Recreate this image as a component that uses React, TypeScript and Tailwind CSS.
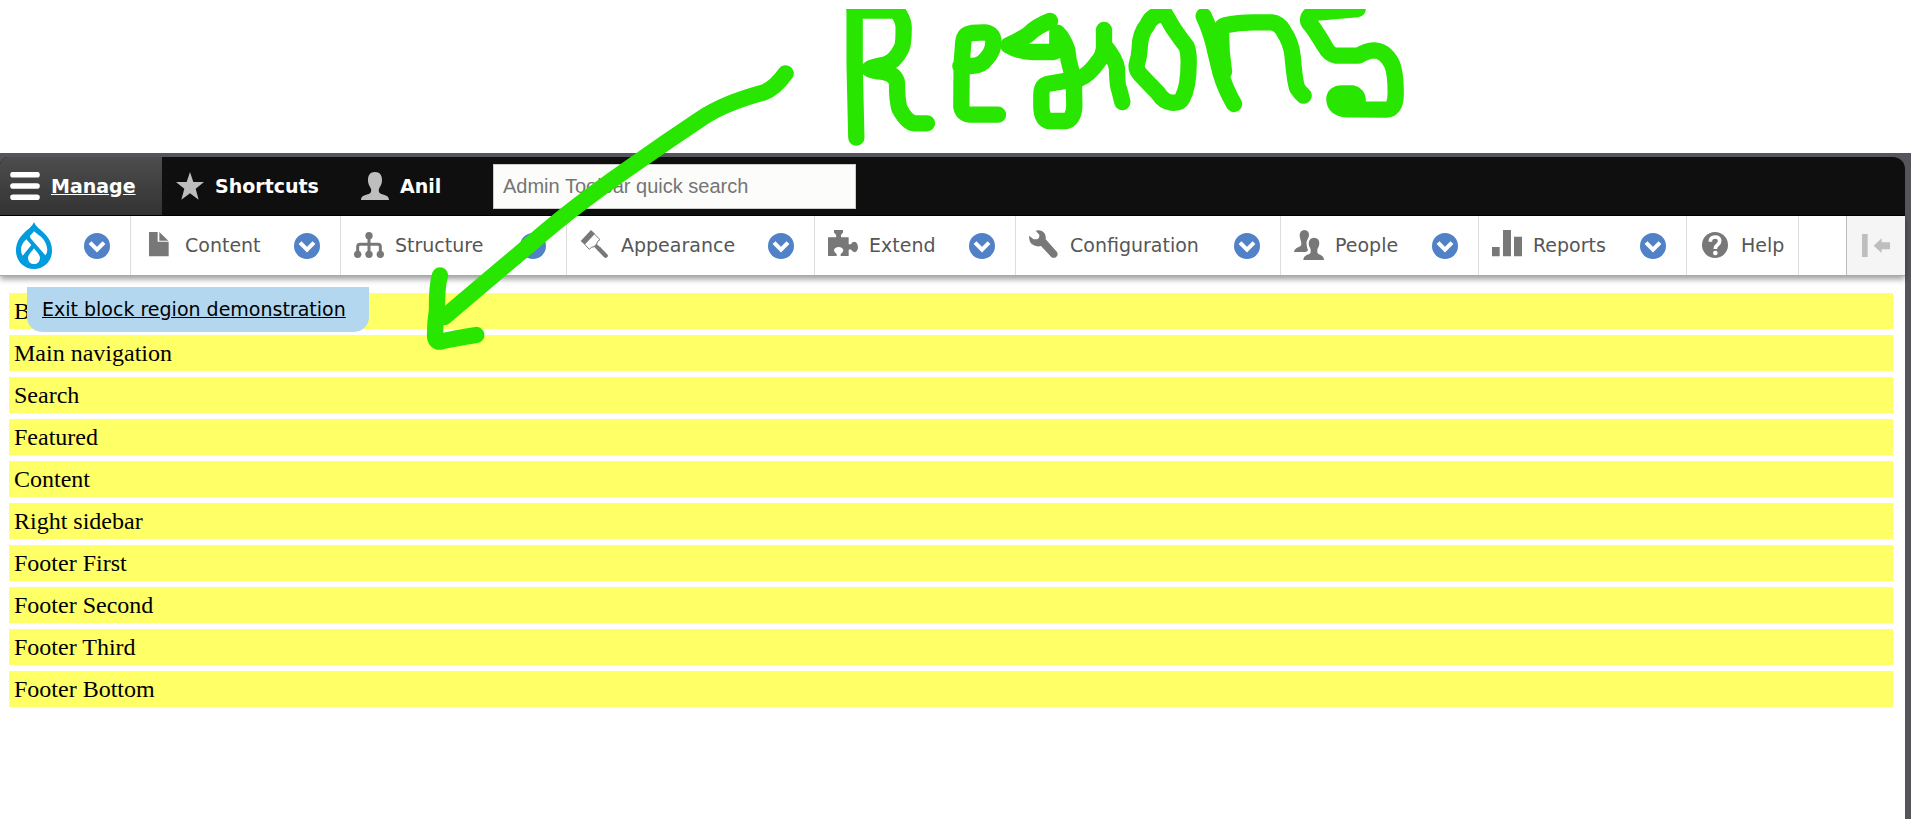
import type { ReactNode } from 'react';

function Icon({ children }: { children: ReactNode }) {
  return (
    <svg className="h-[31px] w-[30px] shrink-0 overflow-visible" viewBox="0 0 90 93" fill="#787878" aria-hidden="true">
      {children}
    </svg>
  );
}

function Chevron({ label }: { label: string }) {
  return (
    <button type="button" aria-label={label} className="shrink-0">
      <svg className="block h-[27px] w-[26px]" viewBox="0 0 78 81" aria-hidden="true">
        <circle cx="39" cy="42" r="39" fill="#5181c6" />
        <path d="M18 32L39 53L60 32" fill="none" stroke="#fff" strokeWidth="12" />
      </svg>
    </button>
  );
}

const menu: { label: string; width: string; arrow: boolean; icon: ReactNode }[] = [
  {
    label: 'Content',
    width: 'w-[210px]',
    arrow: true,
    icon: <path d="M15 6H41V35H74V79H15ZM46 6L73 32H46Z" />,
  },
  {
    label: 'Structure',
    width: 'w-[226px]',
    arrow: true,
    icon: (
      <>
        <path d="M45 17V73M11 73V50Q11 43 18 43H72Q79 43 79 50V73" fill="none" stroke="#787878" strokeWidth="9" />
        <circle cx="45" cy="17" r="11" />
        <circle cx="11" cy="73" r="11" />
        <circle cx="45" cy="73" r="11" />
        <circle cx="79" cy="73" r="11" />
      </>
    ),
  },
  {
    label: 'Appearance',
    width: 'w-[248px]',
    arrow: true,
    icon: (
      <>
        <path d="M33 0L45 11L14 44L2 33Z" />
        <path d="M43 12L60 29Q50 34 50 42L42 50Q33 50 28 58L14 43" fill="none" stroke="#787878" strokeWidth="3" />
        <path d="M42 50L50 42L64 55L54 62Z" />
        <path d="M58 58L77 77" fill="none" stroke="#787878" strokeWidth="13" strokeLinecap="round" />
      </>
    ),
  },
  {
    label: 'Extend',
    width: 'w-[201px]',
    arrow: true,
    icon: (
      <path d="M0 22H24Q27 14 18 8V0H45V8Q36 14 40 22H62V42Q68 46 72 38Q78 33 84 37Q90 42 90 51Q90 62 82 66Q76 68 70 60Q66 56 62 60V78H38V72Q46 68 46 60Q43 51 32 51Q20 52 18 60Q18 68 26 72V78H0Z" />
    ),
  },
  {
    label: 'Configuration',
    width: 'w-[265px]',
    arrow: true,
    icon: (
      <path d="M20 2Q30 -2 40 4Q52 12 50 28L84 66Q89 76 81 82Q73 86 66 80L36 48Q22 52 8 42Q0 33 0 17L14 28H24Q32 26 31 14Z" />
    ),
  },
  {
    label: 'People',
    width: 'w-[198px]',
    arrow: true,
    icon: (
      <>
        <path d="M31 0Q45 1 45 15Q45 20 42 25Q36 34 38 46Q39 54 42 60Q40 66 34 66H0Q0 58 8 54L20 48Q24 44 21 34Q17 24 17 15Q18 1 31 0Z" />
        <path d="M60 23Q76 24 76 40Q76 50 70 58V68Q72 72 80 75Q90 80 90 90H28Q28 80 38 75Q48 72 50 68V58Q44 50 44 40Q45 24 60 23Z" />
      </>
    ),
  },
  {
    label: 'Reports',
    width: 'w-[208px]',
    arrow: true,
    icon: <path d="M0 51H23V79H0ZM33 0H57V79H33ZM66 20H90V79H66Z" />,
  },
  {
    label: 'Help',
    width: 'w-[112px]',
    arrow: false,
    icon: (
      <>
        <circle cx="45" cy="45" r="39" />
        <path d="M31 35Q31 21 45 21Q59 21 59 33Q59 40 52 45Q46 49 46 57" fill="none" stroke="#fff" strokeWidth="11" />
        <circle cx="46" cy="69" r="7" fill="#fff" />
      </>
    ),
  },
];

const regions = [
  'B',
  'Main navigation',
  'Search',
  'Featured',
  'Content',
  'Right sidebar',
  'Footer First',
  'Footer Second',
  'Footer Third',
  'Footer Bottom',
];

function Annotation() {
  return (
    <svg
      className="pointer-events-none absolute top-[9px] left-0 h-[351px] w-[1440px]"
      viewBox="0 27 4320 1053"
      role="img"
      aria-label="Regions"
      fill="none"
      stroke="#28e600"
      strokeWidth="49"
      strokeLinecap="round"
      strokeLinejoin="round"
    >
      <g transform="translate(1200 120)">
        <path d="M1157 100Q1125 145 1092 157Q970 190 905 235Q800 305 690 382Q520 500 400 605L270 715L133 831" />
        <path d="M120 706Q110 740 111 810Q105 850 105 885Q105 905 120 905Q160 896 229 885" />
      </g>
      <g transform="translate(2520 0)">
        <path d="M44 20V200L49 413" />
        <path d="M44 32H170Q192 60 191 85Q191 135 184 146Q164 186 135 194Q100 200 88 207Q100 214 125 215Q168 222 171 250Q171 300 178 325Q200 366 222 370H261" />
        <path d="M361 198L395 198Q425 198 440 175Q462 152 460 122Q458 98 432 97L395 99Q373 102 370 125L365 190L364 320Q368 344 392 344H474" />
        <path d="M630 63Q590 78 563 105Q530 125 505 136Q540 156 580 156H640Q652 154 652 135V98Q670 115 682 150Q684 180 692 205Q702 240 702 262L703 320Q700 358 678 363H625Q605 356 604 320V285Q604 258 622 252L720 235Q748 222 772 188Q792 165 792 140V90V135Q826 175 831 205Q832 260 838 270L847 306" />
      </g>
      <g transform="translate(3360 0)">
        <path d="M135 42Q95 42 82 75Q60 100 59 145Q58 170 50 195Q48 210 62 225L115 280Q130 305 155 308Q180 310 187 295Q206 260 206 190Q207 160 200 140Q180 115 160 85Z" />
        <path d="M251 48Q275 100 285 150L302 220Q315 265 342 312" />
        <path d="M312 215Q303 160 303 100Q300 80 315 76Q355 67 400 67H455Q478 70 490 92Q515 130 518 170Q525 250 532 265Q540 278 551 287" />
        <path d="M713 27L600 37Q566 38 564 60Q564 68 575 78Q590 98 612 135Q628 165 648 167H715Q740 152 762 151Q795 152 815 190Q828 220 827 285Q826 328 800 329L680 328Q644 326 643 298Q644 280 665 280H695Q713 284 713 300V310H670" />
      </g>
    </svg>
  );
}

export default function App() {
  return (
    <div className="relative flex min-h-screen flex-col overflow-hidden bg-white pt-[153px] font-['DejaVu_Sans',sans-serif] text-[19px]">
      <div className="flex flex-1 flex-col border-t-4 border-r-6 border-[#56555b] bg-[#56555b]">
        <header className="relative">
          <nav aria-label="Administration toolbar" className="flex h-[59px] items-center overflow-hidden rounded-tl-lg rounded-tr-xl border-b border-black bg-[#0f0f0f] font-bold text-white">
            <a href="#manage" className="flex h-full w-[162px] items-center gap-[11px] bg-linear-to-b from-[#4d4d4d] to-[#333] pl-[10px] underline">
              <svg className="h-7 w-[30px]" viewBox="0 0 90 84" aria-hidden="true">
                <path d="M9 8H81M9 42H81M9 76H81" stroke="#fff" strokeWidth="17" strokeLinecap="round" />
              </svg>
              Manage
            </a>
            <a href="#shortcuts" className="flex h-full w-[185px] items-center gap-[10px] pl-[13px]">
              <svg className="h-7 w-[30px]" viewBox="0 0 90 84" fill="#bebebe" aria-hidden="true">
                <path d="M45 0L55 30L87 30L62 50L71 83L45 64L19 83L28 50L3 30L35 30Z" />
              </svg>
              Shortcuts
            </a>
            <a href="#user" className="flex h-full w-[146px] items-center gap-[10px] pl-[13px]">
              <svg className="h-7 w-[30px]" viewBox="0 0 90 84" fill="#bebebe" aria-hidden="true">
                <path d="M45 0C60 0 66 10 66 24C66 38 60 44 57 50C55 58 57 63 64 66C78 70 87 72 87 84H3C3 72 12 70 26 66C33 63 35 58 33 50C30 44 24 38 24 24C24 10 30 0 45 0Z" />
              </svg>
              Anil
            </a>
            <input
              type="search"
              aria-label="Admin Toolbar quick search"
              placeholder="Admin Toolbar quick search"
              className="h-[45px] w-[363px] border border-[#ccc] bg-[#fcfcfa] px-[9px] font-['Liberation_Sans',sans-serif] text-[20px] font-normal text-black placeholder:text-[#757575]"
            />
          </nav>
          <nav aria-label="Administration menu" className="relative flex h-[60px] border-b border-[#aaa] bg-white text-[#565656] shadow-[0_3px_6px_rgba(0,0,0,0.4)]">
            <div className="flex w-[131px] items-center justify-between border-r border-[#ddd] pr-5 pl-4">
              <a href="#home" aria-label="Drupal">
                <svg className="block h-[47px] w-9" viewBox="48 247 108 141" aria-hidden="true">
                  <path
                    fill="#009cde"
                    d="M102 247C108 262 120 268 132 280C148 296 156 312 156 333C156 365 132 388 102 388C72 388 48 365 48 333C48 312 56 296 72 280C84 268 96 262 102 247Z"
                  />
                  <path
                    fill="#fff"
                    d="M102 275Q96 283 90 288Q89 292 93 297L136 347Q142 340 142 330Q140 308 124 292Q112 284 102 275ZM79 299L94 316L68 348Q54 322 79 299ZM102 326C108 336 120 344 120 355C119 368 112 373 102 373C92 373 85 368 84 355C84 344 96 336 102 326Z"
                  />
                </svg>
              </a>
              <Chevron label="Expand tools" />
            </div>
            {menu.map((item) => (
              <div key={item.label} className={`flex items-center justify-between border-r border-[#ddd] pl-[13px] ${item.width} ${item.arrow ? 'pr-5' : 'pr-3'}`}>
                <a href={`#${item.label.toLowerCase()}`} className="flex items-center gap-[11px]">
                  <Icon>{item.icon}</Icon>
                  {item.label}
                </a>
                {item.arrow && <Chevron label={`Expand ${item.label}`} />}
              </div>
            ))}
            <button type="button" aria-label="Vertical orientation" className="ml-auto flex w-[59px] items-center justify-center border-l border-[#bbb] bg-[#f5f5f5]">
              <svg className="h-[23px] w-7" viewBox="0 0 84 69" fill="#bebebe" aria-hidden="true">
                <path d="M0 0H17V69H0ZM35 35L59 13V25H84V46H59V57Z" />
              </svg>
            </button>
          </nav>
        </header>
        <main className="flex flex-1 flex-col gap-[6px] bg-white pt-[17px] pr-3 pl-[9px] font-['Liberation_Serif',serif] text-[24px] text-black">
          {regions.map((name) => (
            <div key={name} className="flex h-9 items-center bg-[#ffff66] px-[5px]">
              {name}
            </div>
          ))}
        </main>
      </div>
      <a
        href="#exit"
        className="absolute top-[287px] left-[27px] flex h-[45px] w-[342px] items-center rounded-b-[15px] bg-[#b2d7ef] px-[15px] text-black underline"
      >
        Exit block region demonstration
      </a>
      <Annotation />
    </div>
  );
}
